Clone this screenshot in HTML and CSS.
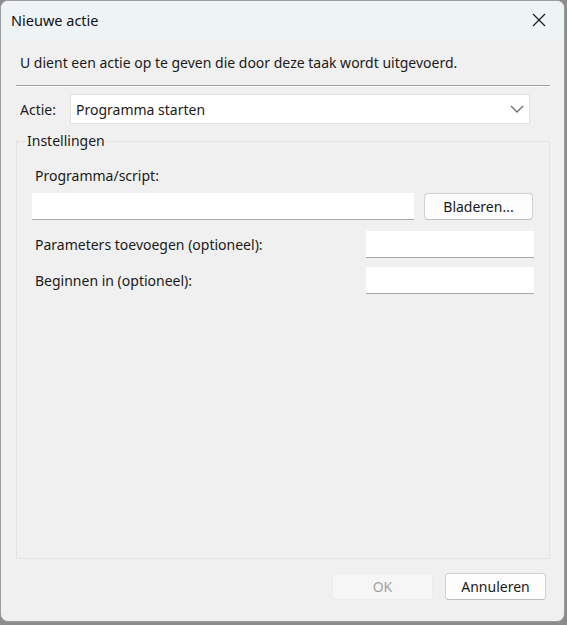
FILE: index.html
```html
<!DOCTYPE html>
<html>
<head>
	<title>Nieuwe actie</title>
	<link rel="stylesheet" href="styles.css">
</head>
<body>

	<div class="window">
		<!-- titelbalk -->
		<div class="titlebar">
			<span class="title">Nieuwe actie</span>
			<svg class="close" width="14" height="14" viewBox="0 0 14 14">
				<path d="M1 1 L13 13 M13 1 L1 13" stroke="#1a1a1a" stroke-width="1.2" fill="none"/>
			</svg>
		</div>

		<div class="content">
			<p class="intro">U dient een actie op te geven die door deze taak wordt uitgevoerd.</p>
			<div class="separator"></div>

			<div class="action-row">
				<label class="lbl">Actie:</label>
				<div class="combo">
					<span>Programma starten</span>
					<svg width="14" height="8" viewBox="0 0 14 8">
						<path d="M1 1 L7 7 L13 1" stroke="#6b6b6b" stroke-width="1.3" fill="none"/>
					</svg>
				</div>
			</div>

			<fieldset class="group">
				<legend>Instellingen</legend>
				<div class="lbl prog-lbl">Programma/script:</div>
				<div class="prog-row">
					<div class="field wide"></div>
					<button class="btn">Bladeren...</button>
				</div>
				<div class="param-row">
					<span class="lbl">Parameters toevoegen (optioneel):</span>
					<div class="field small"></div>
				</div>
				<div class="param-row">
					<span class="lbl">Beginnen in (optioneel):</span>
					<div class="field small"></div>
				</div>
			</fieldset>

			<div class="footer">
				<button class="btn disabled">OK</button>
				<button class="btn">Annuleren</button>
			</div>
		</div>
	</div>

</body>
</html>
```

FILE: styles.css
```css
* {
    box-sizing: border-box;
}

body {
    margin: 0;
    background: #8c8c8c;
    font-family: "Noto Sans", "Open Sans", sans-serif;
    font-size: 14px;
    color: #1a1a1a;
}

.window {
    width: 565px;
    height: 622px;
    background: #f0f0f0;
    border: 1px solid #9c9c9c;
    border-radius: 8px;
    overflow: hidden;
    display: flex;
    flex-direction: column;
}

.titlebar {
    height: 38px;
    background: #eef3f6;
    display: flex;
    align-items: center;
    justify-content: space-between;
    padding: 0 18px 0 10px;
}

.title {
    font-size: 14.5px;
    color: #111;
}

.content {
    flex: 1;
    display: flex;
    flex-direction: column;
    padding: 0 14px 0 15px;
}

.intro {
    margin: 13px 0 0 4px;
    height: 22px;
    line-height: 22px;
}

.separator {
    margin-top: 11px;
    height: 2px;
    border-top: 1px solid #a0a0a0;
    border-bottom: 1px solid #ffffff;
}

.action-row {
    display: flex;
    align-items: center;
    margin-top: 7px;
}

.action-row .lbl {
    width: 54px;
    padding-left: 4px;
}

.combo {
    width: 460px;
    height: 30px;
    background: #fff;
    border: 1px solid #e2e2e2;
    display: flex;
    align-items: center;
    justify-content: space-between;
    padding: 0 5px 0 5px;
}

/* groepsvak met legenda */
.group {
    margin: 8px 0 0 0;
    padding: 0 15px 0 15px;
    border: 1px solid #e3e3e3;
    height: 427px;
}

.group legend {
    padding: 0 1px;
    margin-left: -6px;
    line-height: 18px;
}

.prog-lbl {
    margin-top: 16px;
    margin-left: 3px;
}

.prog-row {
    display: flex;
    align-items: center;
    margin-top: 8px;
}

.field {
    height: 27px;
    background: #fff;
    border-bottom: 1px solid #a8a8a8;
}

.field.wide {
    width: 382px;
}

.field.small {
    width: 168px;
}

.btn {
    font-family: inherit;
    font-size: 14px;
    color: #1a1a1a;
    background: #fdfdfd;
    border: 1px solid #d0d0d0;
    border-bottom-color: #bdbdbd;
    border-radius: 4px;
    height: 27px;
    width: 109px;
    padding: 0;
}

.prog-row .btn {
    margin-left: 10px;
}

.param-row {
    display: flex;
    align-items: center;
    justify-content: space-between;
    margin-top: 11px;
    padding-left: 3px;
}

.param-row + .param-row {
    margin-top: 9px;
}

.footer {
    display: flex;
    justify-content: flex-end;
    gap: 12px;
    margin-top: 14px;
    padding-right: 4px;
}

.footer .btn {
    width: 101px;
}

.btn.disabled {
    background: #f6f6f6;
    border-color: #ececec;
    color: #a3a3a3;
}
```
